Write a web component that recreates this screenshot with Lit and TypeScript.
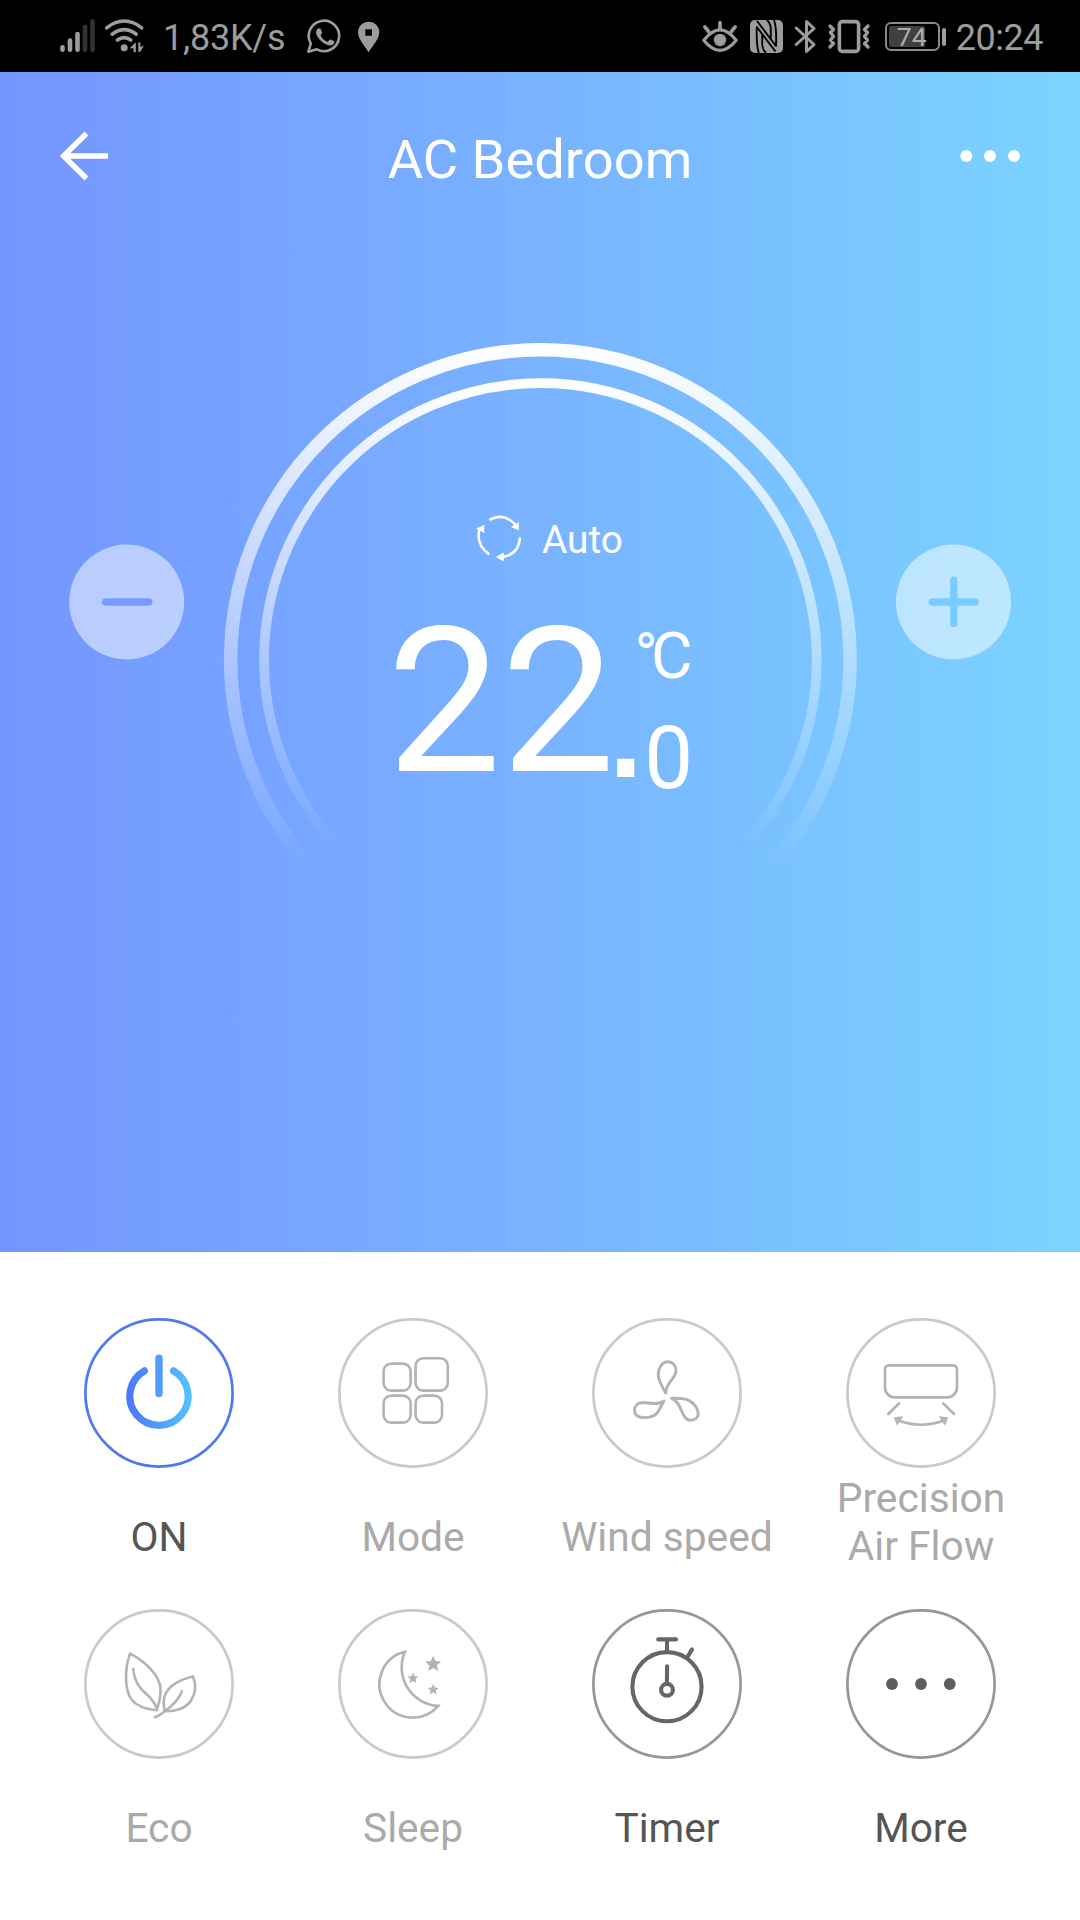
import { LitElement, html, svg, css, SVGTemplateResult } from "lit";
import { customElement, property } from "lit/decorators.js";
import { classMap } from "lit/directives/class-map.js";

type Tone = "on" | "muted" | "active";

interface Control {
  icon: string;
  label: string[];
  tone: Tone;
}

const CONTROLS: Control[] = [
  { icon: "power", label: ["ON"], tone: "on" },
  { icon: "mode", label: ["Mode"], tone: "muted" },
  { icon: "wind", label: ["Wind speed"], tone: "muted" },
  { icon: "airflow", label: ["Precision", "Air Flow"], tone: "muted" },
  { icon: "eco", label: ["Eco"], tone: "muted" },
  { icon: "sleep", label: ["Sleep"], tone: "muted" },
  { icon: "timer", label: ["Timer"], tone: "active" },
  { icon: "more", label: ["More"], tone: "active" },
];

/** Five-pointed star centred on (cx, cy) with outer radius r. */
function star(cx: number, cy: number, r: number): SVGTemplateResult {
  const points: string[] = [];
  for (let i = 0; i < 10; i++) {
    const radius = i % 2 === 0 ? r : r * 0.46;
    const angle = (Math.PI / 5) * i - Math.PI / 2;
    points.push(`${(cx + radius * Math.cos(angle)).toFixed(2)},${(cy + radius * Math.sin(angle)).toFixed(2)}`);
  }
  return svg`<polygon points=${points.join(" ")} fill="currentColor" stroke="none"/>`;
}

/* All control icons share the 150 × 150 box of the round button. */
const ICONS: Record<string, SVGTemplateResult> = {
  power: svg`
    <defs>
      <linearGradient id="power" gradientUnits="userSpaceOnUse" x1="43" y1="0" x2="107" y2="0">
        <stop offset="0" stop-color="#4a76fd"/>
        <stop offset="1" stop-color="#54c3ff"/>
      </linearGradient>
    </defs>
    <path d="M60.4 52.8A29.2 29.2 0 1 0 89.6 52.8" stroke="url(#power)" stroke-width="7.2"/>
    <path d="M75 40.2V75.6" stroke="#549bfe" stroke-width="7.4"/>`,
  mode: svg`
    <g stroke-width="2.6">
      <rect x="45.6" y="45.6" width="27" height="27" rx="7.6"/>
      <rect x="77.6" y="40.2" width="32.2" height="32.4" rx="7.6"/>
      <rect x="45.6" y="77.6" width="27" height="27" rx="7.6"/>
      <rect x="77.6" y="77.6" width="26.4" height="27" rx="7.6"/>
    </g>`,
  wind: svg`
    <g stroke-width="2.9">
      <path d="M73.7 75C69 67 66.2 61.5 66.2 57C66.2 50 70 43.7 75.9 43.7C80.5 43.7 84 47.5 84 52.2C84 61 74.2 63.5 73.7 75Z"/>
      <path d="M72 83C66 87.6 58 84.8 50.5 84.5C45.5 84.5 42.6 88 42.6 92.5C42.6 97.5 47 99.6 53 99.6C66.5 99.6 66.5 91.5 72 83Z"/>
      <path d="M79.6 80.3C86 80.3 93 80 97.5 82.7C103 86.3 106.2 91.5 106.2 96.3C106.2 100 102.5 102.3 98.5 102.2C88.5 102 91 84.5 79.6 80.3Z"/>
    </g>`,
  airflow: svg`
    <g stroke-width="2.7">
      <path d="M43 47.3H107A4 4 0 0 1 111 51.3V69.4A10 10 0 0 1 101 79.4H49A10 10 0 0 1 39 69.4V51.3A4 4 0 0 1 43 47.3Z"/>
      <path d="M53 85.4L42.3 96M97.2 85.4L108 96"/>
      <path d="M52 102.3Q75 111.2 98.3 102.3"/>
    </g>
    <path d="M47.7 99.3L57.3 98.3L51.2 107.7ZM102.4 99.3L92.8 98.3L99 107.7Z" fill="currentColor" stroke="none"/>`,
  eco: svg`
    <g stroke-width="2.6">
      <path d="M46 44.6C60.5 52 76.6 66.5 76.6 81C76.6 88.5 74.8 95 72.6 101.2C60 100 52.5 97 47.5 90.5C40.5 81 40.5 60 46 44.6Z"/>
      <path d="M49.2 60C50.5 74 57 80.5 63.5 86C67.5 89.6 70 93 72.6 99"/>
      <path d="M109 67.4C95 70.5 83.5 77.5 80.5 87.5C79 93 79.8 98 80.8 102.3C91 102.6 102 99.5 107 91.5C111.5 84.5 112.5 76 109 67.4Z"/>
      <path d="M98 82.2C95 89.5 89.5 96 80.8 102.3C77.5 104.8 74.5 107.2 70.8 108.2"/>
    </g>`,
  sleep: svg`
    <path d="M67 42.7A33.4 33.4 0 1 0 100.2 96.9A38.6 38.6 0 0 1 67 42.7Z" stroke-width="2.6" stroke-linejoin="miter"/>
    ${star(95.2, 55.2, 8.4)}${star(75, 69.3, 5.8)}${star(95.2, 80.7, 5.8)}`,
  timer: svg`
    <g stroke-width="4.1">
      <circle cx="75" cy="77.7" r="34.6"/>
      <circle cx="75" cy="80.8" r="5.9"/>
      <path d="M66.2 30.4H84M75 30.4V43M100 40.4L95 48.8M75.1 57.4L74.9 73.5"/>
    </g>`,
  more: svg`
    <g fill="#5e5e5e" stroke="none">
      <circle cx="46" cy="75" r="5.9"/><circle cx="75" cy="75" r="5.9"/><circle cx="103.8" cy="75" r="5.9"/>
    </g>`,
};

@customElement("status-bar")
class StatusBar extends LitElement {
  static styles = css`
    :host {
      display: flex;
      height: 72px;
      box-sizing: border-box;
      background: #000;
      color: #9c9c9c;
      font: 36px/72px Roboto, sans-serif;
      justify-content: space-between;
    }
    .group { display: flex; height: 72px; }
    svg { display: block; flex: none; }
    .text { line-height: 77px; white-space: nowrap; }
    .speed { width: 142px; box-sizing: border-box; letter-spacing: -.2px; }
    .time { letter-spacing: -.5px; }
    .left { padding-left: 56px; }
    .right { padding-right: 37px; }
    .battery {
      display: flex;
      align-items: center;
      width: 62px;
      margin-right: 9px;
    }
    .cell {
      box-sizing: border-box;
      width: 55px;
      height: 29px;
      border: 2px solid #8a8a8a;
      border-radius: 6px;
      padding: 2px;
      margin-top: 1px;
    }
    .charge {
      box-sizing: border-box;
      width: 36px;
      height: 21px;
      background: #404040;
      border-radius: 2px;
      padding-left: 8px;
      font-size: 26.5px;
      line-height: 22px;
      color: #adadad;
      white-space: nowrap;
    }
    .nub { width: 4.5px; height: 18px; border-radius: 2px; background: #9c9c9c; margin: 1px 0 0 2px; }
  `;

  render() {
    return html`
      <div class="group left">
        <svg width="107" height="72" viewBox="56 0 107 72" fill="none" stroke="currentColor" stroke-linecap="round">
          <g stroke-width="4.6">
            <path d="M62.5 47.3V49.7M70 40.5V49.7M77.5 34V49.7"/>
            <path d="M85 27V49.7M92.5 21.3V49.7" stroke="#333"/>
          </g>
          <g stroke-width="3.6">
            <path d="M106.7 27.8Q124.2 14.2 141.7 27.8M112.2 34.2Q124.2 25 136.2 34.2M117.4 40Q124.2 35.4 130.8 40"/>
          </g>
          <circle cx="124.2" cy="47.7" r="3.5" fill="currentColor" stroke="none"/>
          <path d="M135.8 42.3V52.3H133.6V48.3H129.8ZM138.3 42.3H140.3V47L144 45.5L140.3 51.8H138.3Z" fill="currentColor" stroke="none"/>
        </svg>
        <span class="text speed">1,83K/s</span>
        <svg width="80" height="72" viewBox="305 0 80 72" fill="none" stroke="currentColor">
          <path d="M308.4 51.7L310.8 43.5A15.2 15.2 0 1 1 316.8 49.3Z" stroke-width="2.6" stroke-linejoin="round"/>
          <path d="M317.2 29.3C318.2 27.9 320.2 28 320.8 29.3L322 32.2C322.3 33.5 320.5 34.7 320.6 35.5C322 38.5 324.5 40.8 327.5 41.8C328.6 41.7 329.6 39.3 330.8 39.6L334 41.2C335.2 42 333.5 44.7 331.8 45.2C328.5 46.2 323.5 43.7 320.3 40.3C316.7 36.5 314.6 32.3 317.2 29.3Z" fill="currentColor" stroke="none"/>
          <path d="M368.6 52.2C363.5 44.5 358 38.5 358 32.3A10.65 10.65 0 0 1 379.3 32.3C379.3 38.5 373.7 44.5 368.6 52.2ZM365.3 29.2V35.8H372V29.2Z" fill="currentColor" fill-rule="evenodd" stroke="none"/>
        </svg>
      </div>
      <div class="group right">
        <svg width="184" height="72" viewBox="699 0 184 72" fill="none" stroke="currentColor" stroke-linecap="round" stroke-linejoin="round">
          <path d="M701.8 40.2Q718 19.5 734.2 40.2Q718 60.5 701.8 40.2Z" stroke-width="3.2"/>
          <circle cx="718" cy="40" r="6.2" fill="currentColor" stroke="none"/>
          <path d="M718 22.5V29M702.8 26.8L706.6 31.5M733.2 26.8L729.4 31.5" stroke-width="3.6"/>
          <rect x="748" y="20" width="33" height="33" rx="5" fill="currentColor" stroke="none"/>
          <path d="M756.8 53Q754.2 45 754.8 27L773.5 51.5M772 20Q774.8 28 774 46L755 21M760.2 34V44Q760.2 49.5 764 53M768.8 39V29Q768.8 23.500 765 20" stroke="#000" stroke-width="1.900" stroke-linecap="butt"/>
          <path d="M794.2 28L812 44.5L804.5 51.5V21.5L812 28.5L794.2 44.5" stroke-width="3"/>
          <rect x="837.4" y="21.6" width="19.2" height="29.8" rx="3" stroke-width="3.6"/>
          <path d="M828 26L831.5 29.5L828.5 32.5L831.5 36.5L828.5 40L831.5 43.5L828 47M866 26L862.5 29.5L865.5 32.5L862.5 36.5L865.5 40L862.5 43.5L866 47" stroke-width="3.4"/>
        </svg>
        <div class="battery">
          <div class="cell"><div class="charge">74</div></div>
          <div class="nub"></div>
        </div>
        <span class="text time">20:24</span>
      </div>
    `;
  }
}

@customElement("control-button")
class ControlButton extends LitElement {
  @property({ attribute: false }) control!: Control;

  static styles = css`
    :host { display: block; }
    .item {
      display: flex;
      flex-direction: column;
      align-items: center;
      height: 291px;
      color: #b3b3b3;
    }
    .button { display: block; width: 150px; height: 150px; }
    .ring { stroke: #cacaca; stroke-width: 2.7px; }
    .label {
      margin-top: 45px;
      font: 40.7px/48px Roboto, sans-serif;
      text-align: center;
      white-space: nowrap;
      color: #aaa;
    }
    .label.double { margin-top: 6px; }
    .line { display: block; }
    .on .ring { stroke: #4d7af0; }
    .active { color: #666; }
    .active .ring { stroke: #979797; }
    .on .label, .active .label { color: #555; }
  `;

  render() {
    const { icon, label, tone } = this.control;
    return html`
      <div class=${classMap({ item: true, [tone]: true })}>
        <svg class="button" viewBox="0 0 150 150" fill="none" stroke="currentColor" stroke-linecap="round" stroke-linejoin="round">
          <circle class="ring" cx="75" cy="75" r="73.6"/>
          ${ICONS[icon]}
        </svg>
        <div class=${classMap({ label: true, double: label.length > 1 })}>
          ${label.map((line) => html`<span class="line">${line}</span>`)}
        </div>
      </div>
    `;
  }
}

@customElement("app-root")
class AppRoot extends LitElement {
  static styles = css`
    :host {
      display: flex;
      flex-direction: column;
      width: 1080px;
      height: 1920px;
      overflow: hidden;
      background: #fff;
      font-family: Roboto, sans-serif;
    }
    svg { display: block; flex: none; }
    .hero {
      height: 1180px;
      box-sizing: border-box;
      background: linear-gradient(90deg, #7495ff 0%, #79b3ff 50%, #7bd4ff 100%);
      color: #fff;
    }
    .header {
      display: grid;
      grid-template-columns: 1fr auto 1fr;
      align-items: center;
      height: 168px;
      padding: 0 60px;
    }
    .menu { justify-self: end; }
    .title { margin: 7px 0 0; font-size: 54.3px; line-height: 64px; font-weight: 400; }
    .thermostat {
      display: flex;
      justify-content: space-between;
      align-items: flex-start;
      padding: 102px 69px 0;
    }
    .step { margin-top: 202px; }
    .dial { display: grid; width: 634px; }
    .dial > * { grid-area: 1 / 1; }
    .readout { display: flex; flex-direction: column; }
    .mode {
      display: flex;
      align-items: center;
      gap: 19px;
      margin: 172px 0 0 252px;
      font-size: 38.8px;
      line-height: 48px;
    }
    .mode-name { margin: 2px 0 -2px; }
    .temperature {
      display: flex;
      align-items: flex-start;
      margin: 66.7px 0 0 164px;
    }
    .whole { font-size: 203px; line-height: 146px; }
    .point {
      width: 38px;
      margin: 66.5px 0 0 -8px;
      font: 700 97px/97px "DejaVu Sans", sans-serif;
    }
    .side { display: flex; flex-direction: column; margin-top: -4px; }
    .unit { font-size: 64px; line-height: 64px; margin-left: -11px; white-space: nowrap; }
    .degree { letter-spacing: -7px; }
    .tenth { font-size: 87px; line-height: 87px; margin: 26.3px 0 0 -1px; }
    .controls {
      display: grid;
      grid-template-columns: repeat(4, 254px);
      grid-auto-rows: 291px;
      padding: 66px 32px 0;
    }
  `;

  render() {
    return html`
      <status-bar></status-bar>
      <section class="hero">
        <header class="header">
          <svg width="48" height="50" viewBox="0 0 48 50" fill="none" stroke="#fff" stroke-width="5.4">
            <path d="M26.5 2.5L3.5 25L26.5 47.5M3.5 25H48"/>
          </svg>
          <h1 class="title">AC Bedroom</h1>
          <svg class="menu" width="60" height="12" viewBox="0 0 60 12" fill="#fff">
            <circle cx="6.3" cy="6" r="6"/><circle cx="30" cy="6" r="6"/><circle cx="54" cy="6" r="6"/>
          </svg>
        </header>
        <div class="thermostat">
          <svg class="step" width="116" height="116" viewBox="0 0 116 116">
            <circle cx="57.7" cy="58" r="57.5" fill="#fff" fill-opacity=".5"/>
            <path d="M36.7 58H79.7" stroke="#779bff" stroke-width="7.6" stroke-linecap="round"/>
          </svg>
          <div class="dial">
            <svg width="634" height="540" viewBox="222.6 342 634 540" fill="none">
              <defs>
                <linearGradient id="fade-outer" gradientUnits="userSpaceOnUse" x1="0" y1="343" x2="0" y2="870">
                  <stop offset="0" stop-color="#fff"/>
                  <stop offset="1" stop-color="#fff" stop-opacity="0"/>
                </linearGradient>
                <linearGradient id="fade-inner" gradientUnits="userSpaceOnUse" x1="0" y1="378" x2="0" y2="850">
                  <stop offset="0" stop-color="#fff"/>
                  <stop offset="1" stop-color="#fff" stop-opacity="0"/>
                </linearGradient>
              </defs>
              <path d="M311 868A309.7 309.7 0 1 1 769 868" stroke="url(#fade-outer)" stroke-width="13.5"/>
              <path d="M334 843.6A276.3 276.3 0 1 1 746 843.6" stroke="url(#fade-inner)" stroke-width="9.8"/>
            </svg>
            <div class="readout">
              <div class="mode">
                <svg width="48" height="48" viewBox="475 513.6 48 48" fill="none" stroke="#fff" stroke-width="2.5">
                  <path d="M489.3 519.5Q504 511.5 515.5 524.5M520 537Q519 554.5 501 557M489.3 554Q475.5 544.5 479.5 528.5"/>
                  <path d="M511 526.5L518.8 521.5V530ZM495.8 556.5L503.8 552V561ZM476 528L484.3 524.5V532.5Z" fill="#fff" stroke="none"/>
                </svg>
                <span class="mode-name">Auto</span>
              </div>
              <div class="temperature">
                <span class="whole">22</span>
                <span class="point">.</span>
                <div class="side">
                  <span class="unit"><span class="degree">°</span>C</span>
                  <span class="tenth">0</span>
                </div>
              </div>
            </div>
          </div>
          <svg class="step" width="116" height="116" viewBox="0 0 116 116">
            <circle cx="58.5" cy="58" r="57.5" fill="#fff" fill-opacity=".5"/>
            <path d="M37.300 58H80.300M58.800 36.300V79.600" stroke="#7bcbff" stroke-width="7.4" stroke-linecap="round"/>
          </svg>
        </div>
      </section>
      <section class="controls">
        ${CONTROLS.map((control) => html`<control-button .control=${control}></control-button>`)}
      </section>
    `;
  }
}
